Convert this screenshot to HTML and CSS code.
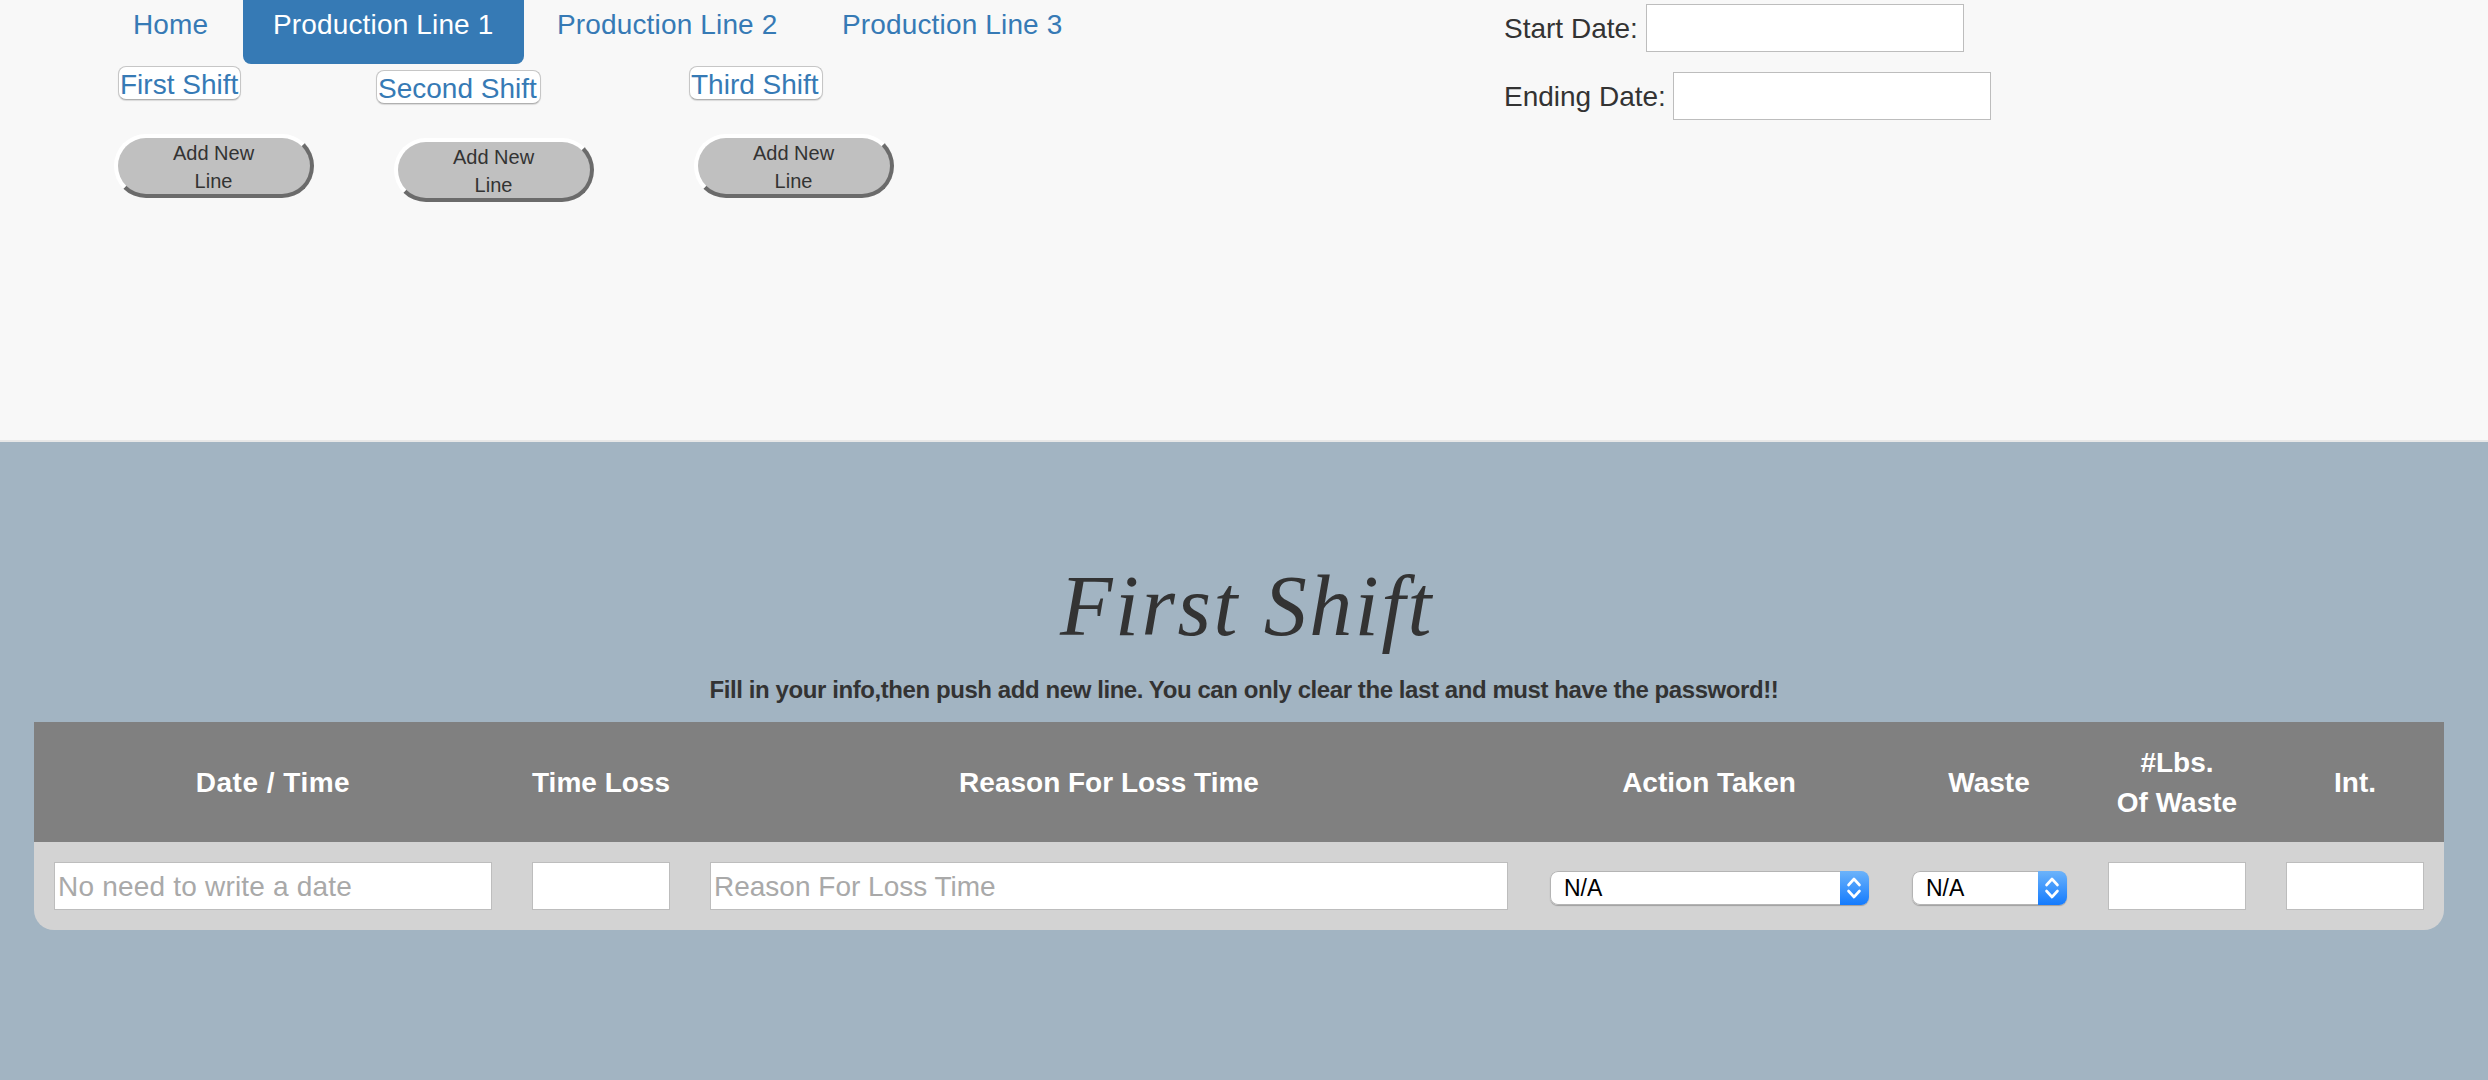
FILE: index.html
```
<!DOCTYPE html>
<html lang="en">
<head>
<meta charset="utf-8">
<title>Production Line 1</title>
<link rel="stylesheet" href="styles.css">
</head>
<body>
<header class="top">
  <div class="controls">
    <nav class="tabs">
      <a class="tab home">Home</a>
      <a class="tab active">Production Line 1</a>
      <a class="tab">Production Line 2</a>
      <a class="tab">Production Line 3</a>
    </nav>
    <div class="shifts">
      <div class="shift first"><a class="shift-link">First Shift</a><button class="add">Add New<br>Line</button></div>
      <div class="shift second"><a class="shift-link">Second Shift</a><button class="add">Add New<br>Line</button></div>
      <div class="shift third"><a class="shift-link">Third Shift</a><button class="add">Add New<br>Line</button></div>
    </div>
  </div>
  <form class="dates">
    <label class="date"><span>Start Date:</span><input class="field" type="text"></label>
    <label class="date ending"><span>Ending Date:</span><input class="field" type="text"></label>
  </form>
</header>
<main class="main">
  <h1 class="title">First Shift</h1>
  <p class="note">Fill in your info,then push add new line. You can only clear the last and must have the password!!</p>
  <table class="log">
    <colgroup>
      <col class="c-date"><col class="c-small"><col class="c-reason"><col class="c-action"><col class="c-waste"><col class="c-small"><col class="c-small">
    </colgroup>
    <thead>
      <tr><th class="wide">Date / Time</th><th>Time Loss</th><th>Reason For Loss Time</th><th>Action Taken</th><th>Waste</th><th>#Lbs.<br>Of Waste</th><th>Int.</th></tr>
    </thead>
    <tbody>
      <tr>
        <td><input class="field loose" type="text" placeholder="No need to write a date"></td>
        <td><input class="field" type="text"></td>
        <td><input class="field" type="text" placeholder="Reason For Loss Time"></td>
        <td><div class="select">N/A<span class="arrows"><svg viewBox="0 0 28 34"><path d="M8.500 14 14 8l5.500 6M8.500 20 14 26l5.500-6"/></svg></span></div></td>
        <td><div class="select">N/A<span class="arrows"><svg viewBox="0 0 28 34"><path d="M8.500 14 14 8l5.500 6M8.500 20 14 26l5.500-6"/></svg></span></div></td>
        <td><input class="field" type="text"></td>
        <td><input class="field" type="text"></td>
      </tr>
    </tbody>
  </table>
</main>
</body>
</html>
```
FILE: styles.css
```
* { box-sizing: border-box; }

body {
  margin: 0;
  height: 1080px;
  overflow: hidden;
  background: #a2b4c2;
  color: #333;
  font: 28px/40px "Helvetica Neue", Helvetica, "Liberation Sans", Arial, sans-serif;
}

.top {
  display: flex;
  height: 442px;
  background: #f8f8f8;
  border-bottom: 2px solid #e7e7e7;
}

.controls { width: 1504px; }

.tabs {
  display: flex;
  gap: 4px;
  height: 64px;
  padding-left: 103px;
}

.tab {
  width: 281px;
  padding: 5px 0 19px 29px;
  border-radius: 0 0 8px 8px;
  color: #367ab5;
  letter-spacing: .15px;
  white-space: nowrap;
}

.home { width: 136px; padding-left: 30px; }
.active { padding-left: 30px; background: #367ab5; color: #fff; }

.shifts { display: flex; padding-left: 114px; }

.shift {
  display: flex;
  flex-direction: column;
  align-items: flex-start;
  gap: 34px;
  padding-top: 2px;
}

.first { width: 262px; }
.second { width: 313px; padding-top: 6px; }

.shift-link {
  height: 34px;
  padding-left: 1px;
  border: 1px solid #c6c6c6;
  border-bottom-color: #b0b0b0;
  border-radius: 8px;
  background: #fff;
  box-shadow: 0 1px 1px rgba(0, 0, 0, .12);
  color: #367ab5;
  line-height: 36px;
  white-space: nowrap;
}

.first .shift-link { width: 123px; margin-left: 4px; }
.second .shift-link { width: 165px; }
.third .shift-link { width: 134px; }
.second .add { margin-left: 18px; }
.third .add { margin-left: 5px; }

.add {
  width: 200px;
  height: 64px;
  padding: 1px 1px 0 0;
  border: 4px solid;
  border-color: #fff #6b6b6b #6b6b6b #fff;
  border-radius: 32px;
  background: #c0c0c0;
  color: #333;
  font: 20px/28px "Helvetica Neue", Helvetica, "Liberation Sans", Arial, sans-serif;
}

.dates {
  display: flex;
  flex-direction: column;
  gap: 20px;
  padding-top: 4px;
}

.date {
  display: flex;
  align-items: center;
  justify-content: space-between;
  width: 460px;
  white-space: nowrap;
}

.date span { padding-top: 2px; }
.ending { width: 487px; }
.date .field { width: 318px; }

.field {
  display: block;
  width: 100%;
  height: 48px;
  padding: 3px 3px 1px;
  border: 1px solid #bdbdbd;
  border-radius: 0;
  background: #fff;
  color: #333;
  font: inherit;
}

.loose { letter-spacing: .2px; }
.field::placeholder { color: #a9a9a9; opacity: 1; }

.main { padding: 108px 44px 0 34px; }

.title {
  margin: 0;
  padding-left: 16px;
  font: italic 400 86px/112px "Apple Chancery", "Z003", "URW Chancery L", "Liberation Serif", serif;
  letter-spacing: 2.500px;
  text-align: center;
}

.note {
  margin: 0;
  padding: 8px 0 12px 10px;
  font-size: 24px;
  font-weight: 700;
  letter-spacing: -.42px;
  text-align: center;
  white-space: nowrap;
}

.log {
  width: 2410px;
  table-layout: fixed;
  border-collapse: separate;
  border-spacing: 0;
}

.c-date { width: 478px; }
.c-small { width: 178px; }
.c-reason { width: 838px; }
.c-action { width: 362px; }
.c-waste { width: 198px; }

th {
  height: 120px;
  padding: 1px 0 0;
  background: #808080;
  color: #fff;
  font-weight: 700;
  vertical-align: middle;
}

.wide { letter-spacing: .5px; }

td { height: 88px; padding: 20px; background: #d3d3d3; }
td:first-child { border-bottom-left-radius: 20px; }
td:last-child { border-bottom-right-radius: 20px; }

.select {
  display: flex;
  justify-content: space-between;
  height: 34px;
  margin: 4px 1px 0 2px;
  padding-left: 14px;
  overflow: hidden;
  border-radius: 8px;
  background: #fff;
  box-shadow: inset 0 0 0 1px #b4b4b4, 0 1px 1px rgba(0, 0, 0, .25);
  color: #000;
  font-size: 23px;
  line-height: 35px;
}

.arrows { width: 29px; height: 34px; background: linear-gradient(#6cb3fa, #147bfe); }
.arrows svg {
  display: block;
  width: 28px;
  height: 34px;
  fill: none;
  stroke: #fff;
  stroke-width: 2.600;
  stroke-linecap: round;
  stroke-linejoin: round;
}
```
